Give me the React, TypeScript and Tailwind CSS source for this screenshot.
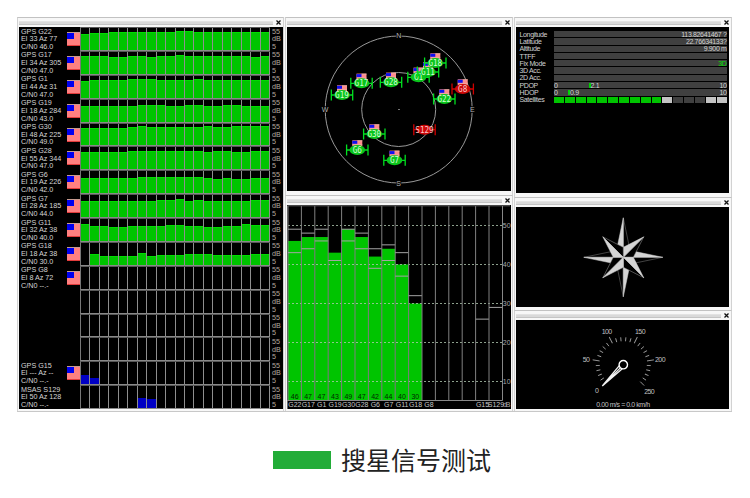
import type { ReactNode } from 'react';
import { clsx } from 'clsx';

interface Channel {
  name?: string;
  position?: string;
  cn0?: string;
  flag?: boolean;
  color?: 'green' | 'blue';
  levels?: number[];
}

const COLUMNS = Array.from({ length: 20 }, (_, i) => i);

const repeat = (value: number, count: number) => Array<number>(count).fill(value);

// levels are the bar heights in pixels, oldest sample first
const CHANNELS: Channel[] = [
  { name: 'GPS G22', position: 'El 33 Az 77', cn0: '46.0', flag: true, levels: [16, 17, 17, ...repeat(17.4, 6), 18, 18.4, 19.2, 18, 18, 18, ...repeat(17.4, 5)] },
  { name: 'GPS G17', position: 'El 34 Az 305', cn0: '47.0', flag: true, levels: [17.5, 17.5, 17.5, 16.7, 16.7, 17.7, 17.7, 16.7, 17.3, 17.3, 18.8, 17.8, 17.8, 17.8, 17.8, 17.3, 17.3, 17.3, 17, 17.6] },
  { name: 'GPS G1', position: 'El 44 Az 31', cn0: '47.0', flag: true, levels: [17, 18, 18, 18, 17.4, 18.4, 18.4, 18.4, 18, 18, 17.4, 17.4, 18.2, ...repeat(17.6, 7)] },
  { name: 'GPS G19', position: 'El 18 Az 284', cn0: '43.0', flag: true, levels: [...repeat(15.8, 6), ...repeat(16.4, 3), 15.8, 15.8, 16.2, 16.2, 15.8, 15.8, 16.3, 16.3, ...repeat(15.8, 3)] },
  { name: 'GPS G30', position: 'El 48 Az 225', cn0: '49.0', flag: true, levels: [...repeat(17.6, 5), 18, 19, 18, 18, ...repeat(18.3, 4), 19, 18.3, 18.3, 19, 19, 19, 19] },
  { name: 'GPS G28', position: 'El 55 Az 344', cn0: '47.0', flag: true, levels: [...repeat(17.4, 5), ...repeat(18.4, 8), 17.2, 18.2, 18.2, 17.4, 17.4, 18.2, 18.2] },
  { name: 'GPS G6', position: 'El 19 Az 226', cn0: '42.0', flag: true, levels: [...repeat(15.3, 6), ...repeat(16.4, 4), ...repeat(15.8, 3), 15, 14, 15, 14, 14.6, 14.8, 15.3] },
  { name: 'GPS G7', position: 'El 28 Az 185', cn0: '44.0', flag: true, levels: [...repeat(15.6, 4), ...repeat(16.2, 4), 16.8, 16.8, 17.6, 16, 16.6, 15.8, 15.8, 16.2, 16.2, 16.2, 17, 17] },
  { name: 'GPS G11', position: 'El 32 Az 38', cn0: '40.0', flag: true, levels: [16.4, 15, 15, 13.8, 13.8, ...repeat(15, 4), 15.6, 15.6, 15, 15, 14.2, 14.2, 14.6, 15, 16.4, 15.8, 15.8] },
  { name: 'GPS G18', position: 'El 18 Az 38', cn0: '30.0', flag: true, levels: [0, 10.8, ...repeat(9.2, 4), 11.4, 9.2, ...repeat(9.8, 3), ...repeat(10.6, 3), ...repeat(9.8, 4), 10.4, 10.4] },
  { name: 'GPS G8', position: 'El 8 Az 72', cn0: '--.-', flag: true },
  {},
  {},
  {},
  { name: 'GPS G15', position: 'El --- Az --', cn0: '--.-', flag: true, color: 'blue', levels: [8.7, 6.3] },
  { name: 'MSAS S129', position: 'El 50 Az 128', cn0: '--.-', color: 'blue', levels: [...repeat(0, 6), 9.7, 9.3] },
];

interface Signal {
  name: string;
  value?: number;
  min?: number;
  max?: number;
}

const SIGNALS: Signal[] = [
  { name: 'G22', value: 46, min: 43, max: 49 },
  { name: 'G17', value: 47, min: 44, max: 48 },
  { name: 'G1', value: 47, min: 46, max: 49 },
  { name: 'G19', value: 43, min: 41 },
  { name: 'G30', value: 49, min: 46, max: 49 },
  { name: 'G28', value: 47, min: 44, max: 48 },
  { name: 'G6', value: 42, min: 39, max: 44 },
  { name: 'G7', value: 44, min: 41, max: 45 },
  { name: 'G11', value: 40, min: 37, max: 43 },
  { name: 'G18', value: 30, max: 32 },
  { name: 'G8' },
  { name: '' },
  { name: '' },
  { name: '' },
  { name: 'G15', max: 26 },
  { name: 'S129', max: 29 },
];

const SATELLITES = [
  { name: 'G19', x: 342, y: 95 },
  { name: 'G17', x: 361.5, y: 83.3 },
  { name: 'G28', x: 391, y: 82.3 },
  { name: 'G1', x: 418.5, y: 77.3 },
  { name: 'G11', x: 428, y: 72 },
  { name: 'G18', x: 435.3, y: 63 },
  { name: 'G8', x: 462.7, y: 89, lost: true },
  { name: 'G22', x: 444.3, y: 99 },
  { name: 'S129', x: 424.5, y: 129.7, lost: true, noFlag: true },
  { name: 'G30', x: 374.3, y: 134 },
  { name: 'G6', x: 357.3, y: 150 },
  { name: 'G7', x: 394.5, y: 160.3 },
];

interface PanelProps {
  className?: string;
  bodyClassName?: string;
  children: ReactNode;
}

const Panel = ({ className, bodyClassName, children }: PanelProps) => (
  <section className={clsx('flex flex-col border-x border-t border-x-[#d2d2d2] border-t-[#c2c2c2] bg-[#f7f7f7] pl-px', className)}>
    <header className="flex h-[9px] shrink-0 items-center gap-[3px] pr-px">
      <div className="h-[4px] flex-1 border-y border-t-[#e2e2e2] border-b-[#c4c4c4] bg-[#d9d9d9]" />
      <svg viewBox="0 0 5 5" className="mr-px size-[5px]">
        <path d="M.5 .5L4.5 4.5M4.5 .5L.5 4.5" stroke="#111" strokeWidth="1.3" />
      </svg>
    </header>
    <div className={clsx('overflow-hidden bg-black', bodyClassName)}>{children}</div>
  </section>
);

const Flag = () => (
  <div className="h-[14px] w-[13px] border-t border-b border-t-[#c79b90] border-b-[#e23c3c] bg-[#ff8080]">
    <div className="h-[6px] w-[7px] bg-[#0000ef]" />
  </div>
);

const ChannelRow = ({ name, position, cn0, flag, color = 'green', levels = [] }: Channel) => (
  <div className="flex min-h-0 flex-1 text-[7.2px] leading-[7.7px] text-[#d6d6d6]">
    <div className="w-[48px] pt-[0.5px] pl-[2px] whitespace-nowrap">
      {name && (
        <>
          <div>{name}</div>
          <div>{position}</div>
          <div>C/N0 {cn0}</div>
        </>
      )}
    </div>
    <div className="w-[13px] pt-[5px]">{flag && <Flag />}</div>
    <div className="flex w-[190px] border-t border-b border-l border-t-[#585858] border-b-[#8a8a8a] border-l-[#777]">
      {COLUMNS.map((i) => (
        <div key={i} className="flex flex-1 items-end border-r border-[#8f8f8f]">
          <div
            className={clsx('w-full', color === 'green' ? 'border-t border-[#00dc00] bg-[#00c400]' : 'bg-[#0000c4]', !levels[i] && 'hidden')}
            style={{ height: levels[i] }}
          />
        </div>
      ))}
    </div>
    <div className="pt-[0.5px] pl-[2px] text-[#b4a99f]">
      <div>55</div>
      <div>dB</div>
      <div>5</div>
    </div>
  </div>
);

const SkyView = () => (
  <svg viewBox="287 27 224 164" className="block h-full w-full">
    <g fill="none" stroke="#999" strokeWidth="1">
      <circle cx="398.7" cy="109.5" r="73.5" />
      <circle cx="398.7" cy="109.5" r="37" />
    </g>
    <path d="M398 109.5h2" stroke="#777" />
    <g className="font-['Liberation_Sans'] text-[7px]" fill="#b5b5b5" stroke="#000" strokeWidth="1.5" paintOrder="stroke" textAnchor="middle">
      <text x="398.7" y="38">N</text>
      <text x="398.7" y="185.5">S</text>
      <text x="325" y="112">W</text>
      <text x="472.3" y="112">E</text>
    </g>
    {SATELLITES.map(({ name, x, y, lost, noFlag }) => (
      <g key={name} transform={`translate(${x} ${y})`}>
        <path d="M-10.7 -5.5V5.5M10.7 -5.5V5.5M-10.7 0H10.7" stroke={lost ? '#d00000' : '#00e020'} strokeWidth="1.3" />
        {!noFlag && (
          <g>
            <rect x="-5" y="-9.7" width="10" height="6" fill="#ff8c8c" />
            <path d="M0 -9.2H5M-5 -5.2H5" stroke="#e8b8a8" strokeWidth="0.8" />
            <rect x="-5" y="-9.2" width="5" height="3" fill="#1010f0" />
          </g>
        )}
        <ellipse rx="7.8" ry="5" fill={lost ? '#cc0808' : '#0ac41c'} />
        <text y="3" textAnchor="middle" className="font-['DejaVu_Sans_Mono'] text-[8.4px]" fill={lost ? '#ffc8c8' : '#d4ffd4'} textLength={name.length * 4.6} lengthAdjust="spacingAndGlyphs">
          {name}
        </text>
      </g>
    ))}
  </svg>
);

const BAR_WIDTH = 13.4;
const levelY = (db: number) => 225.3 + (50 - db) * 3.91;

const SignalChart = () => (
  <svg viewBox="287 205 224 204" className="block h-full w-full font-['Liberation_Sans'] text-[7px]">
    {SIGNALS.map(({ value }, i) =>
      value ? <rect key={i} x={288 + i * BAR_WIDTH} y={levelY(value)} width={BAR_WIDTH} height={400.5 - levelY(value)} fill="#00c400" /> : null,
    )}
    {[10, 20, 30, 40, 50].map((db) => (
      <g key={db}>
        <path d={`M288 ${Math.floor(levelY(db)) + 0.5}H502`} stroke="#b0c8b0" strokeWidth="0.8" strokeDasharray="2 2" />
        <text x="502.8" y={levelY(db) + 2.5} fill="#aaa">{db}</text>
      </g>
    ))}
    {SIGNALS.map(({ name, value, min, max }, i) => {
      const x = 288 + i * BAR_WIDTH;
      return (
        <g key={i}>
          <path d={`M${x} 206V400.5`} stroke="#808080" />
          {[min, max].map((db, k) => db && <path key={k} d={`M${x} ${levelY(db)}h${BAR_WIDTH}`} stroke="#a4a4a4" />)}
          {value && <text x={x + 6.7} y="399" textAnchor="middle" fill="#002800">{value}</text>}
          <text x={x + 6.9} y="407" textAnchor="middle" fill="#c8c8c8">{name}</text>
        </g>
      );
    })}
    <path d="M287.5 409V205.8H510" stroke="#666" fill="none" />
    <path d="M287 400.5H502.5V206" stroke="#888" fill="none" />
    <text x="503" y="407" fill="#aaa" textLength="7.5">dB</text>
  </svg>
);

const InfoRow = ({ label, children }: { label: string; children?: ReactNode }) => (
  <div className="flex h-[7.28px] items-center">
    <div className="w-[34.5px] shrink-0 whitespace-nowrap">{label}</div>
    <div className="flex h-[6.3px] flex-1 items-center justify-end bg-[#404040]">{children}</div>
  </div>
);

const Dop = ({ value, marker }: { value: string; marker: string }) => (
  <div className="flex w-full items-center">
    <span>0</span>
    <div className={clsx('h-[5px] w-[2px] bg-[#00d400]', marker)} />
    <span>{value}</span>
    <span className="ml-auto">10</span>
  </div>
);

const Info = () => (
  <div className="pt-[3.6px] pr-[2.5px] pl-[3.5px] text-[7px] leading-[7px] tracking-[-0.35px] text-[#d2d2d2]">
    <InfoRow label="Longitude">113.82641467 ?</InfoRow>
    <InfoRow label="Latitude">22.76634133?</InfoRow>
    <InfoRow label="Altitude">9.900 m</InfoRow>
    <InfoRow label="TTFF" />
    <InfoRow label="Fix Mode">
      <span className="text-[#00e000]">3D</span>
    </InfoRow>
    <InfoRow label="3D Acc." />
    <InfoRow label="2D Acc." />
    <InfoRow label="PDOP">
      <Dop value="2.1" marker="ml-[31px]" />
    </InfoRow>
    <InfoRow label="HDOP">
      <Dop value="0.9" marker="ml-[10.5px]" />
    </InfoRow>
    <div className="flex h-[7.28px] items-center">
      <div className="w-[34.5px]">Satellites</div>
      <div className="grid h-[6px] flex-1 grid-cols-16 gap-px">
        {SIGNALS.map((signal, i) => (
          <div key={i} className={signal.value ? 'bg-[#00c400]' : signal.name ? 'bg-[#c4c4c4]' : 'bg-[#404040]'} />
        ))}
      </div>
    </div>
  </div>
);

const Compass = () => (
  <svg viewBox="516 207 213 99.5" className="block h-full w-full">
    <g transform="translate(623.3 257.3)" strokeLinejoin="round">
      {[0, 90, 180, 270].map((angle) => (
        <g key={angle} transform={`rotate(${angle})`} stroke="#858585" strokeWidth="0.5">
          <path d="M0 -39.5L5.7 -12L0 0Z" fill="#000" />
          <path d="M0 -39.5L-5.7 -12L0 0Z" fill="#d4d4d4" stroke="#d4d4d4" />
        </g>
      ))}
      {[0, 90, 180, 270].map((angle) => (
        <g key={angle} transform={`rotate(${angle})`} stroke="#a0a0a0" strokeWidth="0.5">
          <path d="M20.5 -20.5L10 0L0 0Z" fill="#000" />
          <path d="M20.5 -20.5L0 -10L0 0Z" fill="#d4d4d4" stroke="#d4d4d4" />
        </g>
      ))}
    </g>
  </svg>
);

const TICKS = Array.from({ length: 26 }, (_, i) => i);

const Speedometer = () => (
  <svg viewBox="516 320 213 89" className="block h-full w-full font-['Liberation_Sans'] text-[7px]">
    <g transform="translate(623.3 364.7)">
      {TICKS.slice(1).map((tick) => (
        <path
          key={tick}
          d={tick % 5 === 0 ? (tick < 25 ? 'M0 -24V-31' : 'M0 -24V-29.5') : 'M0 -23.5V-27.5'}
          transform={`rotate(${-135 + tick * 10.8})`}
          stroke="#9c9c9c"
          strokeWidth="0.9"
        />
      ))}
      <path d="M-4 1L-21 21.3L-1 4M-21 21.3L-3 3.2" stroke="#f2f2f2" strokeWidth="1.3" fill="none" />
      <circle r="4.2" fill="#000" stroke="#fff" strokeWidth="1.4" />
    </g>
    <g fill="#c0c0c0" textAnchor="middle">
      <text x="597" y="393.2">0</text>
      <text x="586.3" y="362" textLength="7">50</text>
      <text x="607" y="333.5" textLength="10.5">100</text>
      <text x="640.3" y="333.5" textLength="10.5">150</text>
      <text x="660.3" y="362" textLength="10.5">200</text>
      <text x="649.5" y="393.5" textLength="10.5">250</text>
      <text x="623.2" y="407" textLength="54">0.00 m/s = 0.0 km/h</text>
    </g>
  </svg>
);

export default function App() {
  return (
    <main className="h-[498px] w-[750px] overflow-hidden bg-white pt-[17px] font-['Liberation_Sans','Noto_Sans_CJK_SC',sans-serif]">
      <div className="ml-[17px] flex h-[395px] w-[715px] gap-px border-b border-[#c8c8c8] bg-[#f7f7f7]">
        <Panel className="w-[267px]" bodyClassName="flex h-[382px] w-[264px] flex-col">
          {CHANNELS.map((channel, i) => (
            <ChannelRow key={i} {...channel} />
          ))}
        </Panel>

        <div className="flex w-[228px] flex-col">
          <Panel className="h-[178px]" bodyClassName="h-[164px] w-[224px]">
            <SkyView />
          </Panel>
          <Panel className="flex-1" bodyClassName="h-[204px] w-[224px]">
            <SignalChart />
          </Panel>
        </div>

        <div className="flex w-[218px] flex-col">
          <Panel className="h-[180px]" bodyClassName="h-[166px] w-[213px]">
            <Info />
          </Panel>
          <Panel className="h-[113px]" bodyClassName="h-[99.5px] w-[213px]">
            <Compass />
          </Panel>
          <Panel className="flex-1" bodyClassName="h-[89px] w-[213px]">
            <Speedometer />
          </Panel>
        </div>
      </div>

      {/* Caption */}
      <div className="mt-[29px] ml-[273px] flex h-[36px] items-center gap-[10px]">
        <div className="mt-[2px] h-[18px] w-[58px] bg-[#22ac38]" />
        <span className="font-['Noto_Sans_CJK_SC',sans-serif] text-[25px] leading-[36px] text-[#222]">搜星信号测试</span>
      </div>
    </main>
  );
}
